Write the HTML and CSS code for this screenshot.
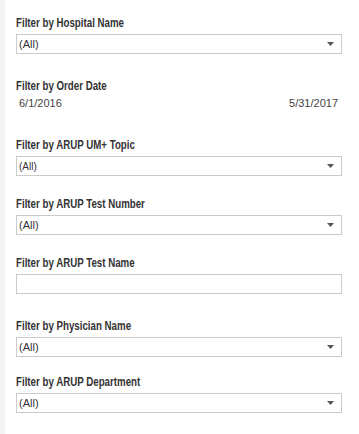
FILE: index.html
```html
<!DOCTYPE html>
<html lang="en">
<head>
    <meta charset="UTF-8">
    <meta name="viewport" content="width=device-width, initial-scale=1.0">
    <title>Filters</title>
    <link rel="stylesheet" href="styles.css">
</head>
<body>
    <div class="panel">
        <div class="filter first">
            <div class="filter-label"><span>Filter by Hospital Name</span></div>
            <div class="select">
                <span>(All)</span>
                <svg class="arrow" width="7" height="4" viewBox="0 0 7 4"><path d="M0 0H7L3.5 4Z" fill="#555"/></svg>
            </div>
        </div>

        <div class="filter gap-l">
            <div class="filter-label"><span>Filter by Order Date</span></div>
            <div class="date-range">
                <span>6/1/2016</span>
                <span>5/31/2017</span>
            </div>
        </div>

        <div class="filter gap-xl">
            <div class="filter-label"><span>Filter by ARUP UM+ Topic</span></div>
            <div class="select small">
                <span>(All)</span>
                <svg class="arrow" width="7" height="4" viewBox="0 0 7 4"><path d="M0 0H7L3.5 4Z" fill="#555"/></svg>
            </div>
        </div>

        <div class="filter gap-m">
            <div class="filter-label"><span>Filter by ARUP Test Number</span></div>
            <div class="select">
                <span>(All)</span>
                <svg class="arrow" width="7" height="4" viewBox="0 0 7 4"><path d="M0 0H7L3.5 4Z" fill="#555"/></svg>
            </div>
        </div>

        <div class="filter gap-m">
            <div class="filter-label"><span>Filter by ARUP Test Name</span></div>
            <div class="text-box"></div>
        </div>

        <div class="filter gap-l">
            <div class="filter-label"><span>Filter by Physician Name</span></div>
            <div class="select">
                <span>(All)</span>
                <svg class="arrow" width="7" height="4" viewBox="0 0 7 4"><path d="M0 0H7L3.5 4Z" fill="#555"/></svg>
            </div>
        </div>

        <div class="filter gap-s">
            <div class="filter-label"><span>Filter by ARUP Department</span></div>
            <div class="select">
                <span>(All)</span>
                <svg class="arrow" width="7" height="4" viewBox="0 0 7 4"><path d="M0 0H7L3.5 4Z" fill="#555"/></svg>
            </div>
        </div>
    </div>
</body>
</html>
```

FILE: styles.css
```css
body {
    margin: 0;
    background-color: white;
    color: #333;
    font-family: "Liberation Sans", Arial, sans-serif;
}

.panel {
    border-left: 5px solid #f4f4f4;
    min-height: 434px;
    box-sizing: border-box;
    padding: 0 17px 0 11px;
}

.filter.first {
    padding-top: 15px;
}

.filter.gap-s {
    margin-top: 17px;
}

.filter.gap-m {
    margin-top: 20px;
}

.filter.gap-l {
    margin-top: 24px;
}

.filter.gap-xl {
    margin-top: 27px;
}

.filter-label {
    font-weight: bold;
    font-size: 12px;
    line-height: 16px;
    height: 16px;
    margin-bottom: 3px;
    color: #333;
    white-space: nowrap;
}

/* the dashboard font is a condensed face */
.filter-label span {
    display: inline-block;
    transform: scaleX(0.81);
    transform-origin: left center;
}

.select,
.text-box {
    height: 20px;
    box-sizing: border-box;
    border: 1px solid #cbcbcb;
    background-color: white;
}

.select {
    display: flex;
    align-items: center;
    justify-content: space-between;
    padding: 0 7px 0 2px;
    font-size: 11px;
    color: #333;
}

.select.small {
    font-size: 10px;
}

.select .arrow {
    display: block;
}

.date-range {
    display: flex;
    justify-content: space-between;
    padding: 0 4px 0 3px;
    font-size: 11px;
    line-height: 13px;
    color: #444;
}
```
